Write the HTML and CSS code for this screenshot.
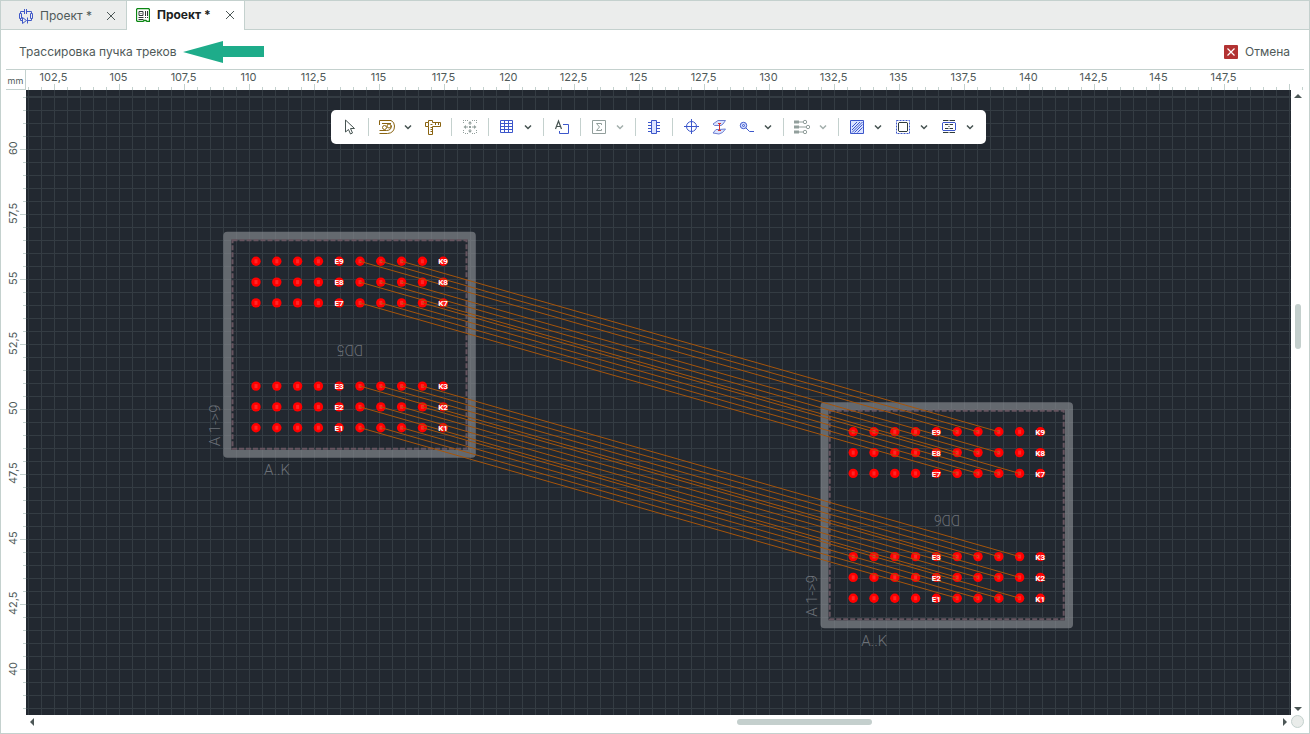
FILE: index.html
```html
<!DOCTYPE html>
<html lang="ru">
<head>
<meta charset="utf-8">
<title>Проект</title>
<link rel="stylesheet" href="styles.css">
</head>
<body>
<nav class="tabs">
  <div class="tab">
    <svg class="tab-icon" width="16" height="16" viewBox="0 0 16 16" fill="none" stroke="#4059c8"><path d="M6 3.500H2.500V6M2.500 10v2.500H5M6.500 1v5M8.500 1v5M8.500 3.500h5V6M13.500 10v2.500H9M1.500 5.500h2v5h-2zM12.500 5.500h2v5h-2zM4.500 9.500v6l4-3zM9.500 9.500v6"/></svg>
    <a class="tab-name" href="#schematic">Проект *</a>
    <button class="close" aria-label="Закрыть"><svg width="10" height="10" viewBox="0 0 10 10"><path d="M1 1l8 8M9 1l-8 8" stroke="#4c5756" fill="none"/></svg></button>
  </div>
  <div class="tab active">
    <svg class="tab-icon" width="14" height="14" viewBox="0 0 14 14" fill="none"><path d="M1.500.5h11l1 1v12h-2.500l-1-1h-2l-1 1h-5.500l-1-1v-11z" stroke="#0b8613" stroke-width="1.300"/><path d="M3 3.500h4v4H3zM4.500 5.500h1M9.500 3v5M11.500 3v5M2.500 9.500h5M2.500 11.500h5M9 9.500h1M11 9.500h1" stroke="#303838"/></svg>
    <a class="tab-name" href="#board">Проект *</a>
    <button class="close" aria-label="Закрыть"><svg width="10" height="10" viewBox="0 0 10 10"><path d="M1 1l8 8M9 1l-8 8" stroke="#4c5756" fill="none"/></svg></button>
  </div>
</nav>

<header class="mode">
  <span class="mode-name">Трассировка пучка треков</span>
  <svg width="81" height="22" viewBox="0 0 81 22"><path d="M0 11L40 0v5h41v11H40v6z" fill="#1eac8a"/></svg>
  <button class="cancel"><svg width="14" height="14" viewBox="0 0 14 14"><rect width="14" height="14" rx="1" fill="#b23232"/><path d="M3.500 3.500l7 7M10.500 3.500l-7 7" stroke="#fff" stroke-width="1.200"/></svg>Отмена</button>
</header>

<main class="workspace">
  <div class="unit">mm</div>
  <div class="ruler-x"><div class="marks-x">
    <span>102,5</span><span>105</span><span>107,5</span><span>110</span><span>112,5</span><span>115</span><span>117,5</span><span>120</span><span>122,5</span><span>125</span><span>127,5</span><span>130</span><span>132,5</span><span>135</span><span>137,5</span><span>140</span><span>142,5</span><span>145</span><span>147,5</span>
  </div></div>
  <div class="ruler-y"><div class="marks-y">
    <span>60</span><span>57,5</span><span>55</span><span>52,5</span><span>50</span><span>47,5</span><span>45</span><span>42,5</span><span>40</span>
  </div></div>

  <section class="canvas">
    <svg class="board" width="100%" height="100%">
      <defs>
        <g id="pad"><circle r="4.700" fill="#f00"/><rect x="-1.500" y="-2" width="3" height="4" fill="#ff2626"/></g>
        <g id="pads">
          <use href="#pad"/><use href="#pad" x="20.800"/><use href="#pad" x="41.600"/><use href="#pad" x="62.400"/><use href="#pad" x="83.200"/><use href="#pad" x="104"/><use href="#pad" x="124.800"/><use href="#pad" x="145.600"/><use href="#pad" x="166.400"/><use href="#pad" x="187.200"/>
        </g>
        <g id="footprint">
          <rect class="courtyard" x="-28.700" y="-25.600" width="244.500" height="218"/>
          <rect class="outline" x="-23.500" y="-21" width="234" height="208.500"/>
          <use href="#pads"/><use href="#pads" y="20.800"/><use href="#pads" y="41.600"/>
          <use href="#pads" y="124.800"/><use href="#pads" y="145.600"/><use href="#pads" y="166.400"/>
          <text class="silk" x="8" y="214">A..K</text>
          <text class="silk" transform="translate(-36 185) rotate(-90)">A 1-&gt;9</text>
        </g>
        <path id="net" d="M104 0l597.200 170.500"/>
        <g id="bundle3"><use href="#net"/><use href="#net" x="20.800"/><use href="#net" x="41.600"/></g>
        <g id="bundle4"><use href="#bundle3"/><use href="#net" x="62.400"/></g>
        <g id="pin-names" class="pin">
          <text x="83" y="3">E9</text><text x="83" y="24">E8</text><text x="83" y="45">E7</text><text x="83" y="128">E3</text><text x="83" y="149">E2</text><text x="83" y="170">E1</text>
          <text x="187" y="3">K9</text><text x="187" y="24">K8</text><text x="187" y="45">K7</text><text x="187" y="128">K3</text><text x="187" y="149">K2</text><text x="187" y="170">K1</text>
        </g>
      </defs>
      <use href="#footprint" x="230" y="171.300"/>
      <use href="#footprint" x="827.200" y="341.800"/>
      <text class="refdes" transform="translate(337 255) rotate(180)">DD5</text>
      <text class="refdes" transform="translate(934 425) rotate(180)">DD6</text>
      <g class="nets" transform="translate(230 171.300)">
        <use href="#bundle3"/><use href="#bundle3" y="20.800"/><use href="#bundle4" y="41.600"/>
        <use href="#bundle4" y="124.800"/><use href="#bundle4" y="145.600"/><use href="#bundle4" y="166.400"/>
      </g>
      <use href="#pin-names" x="230" y="171.300"/>
      <use href="#pin-names" x="827.200" y="341.800"/>
    </svg>

    <svg class="sprite" width="0" height="0"><symbol id="chevron" viewBox="0 0 8 8"><path d="M1 2.500l3 3 3-3" fill="none" stroke="currentColor" stroke-width="1.500"/></symbol></svg>

    <div class="toolbar" role="toolbar">
      <button class="tool" aria-label="Выбор"><svg viewBox="0 0 16 16"><path d="M3.500 1v12l3-2.500 2 4.500 2-1-2-4.500h4z" stroke="#465351"/></svg></button>
      <i class="sep"></i>
      <button class="tool" aria-label="Трассировка"><svg viewBox="0 0 16 16"><path d="M.5 6V1.500h11.500q3.500 1.500 3.500 5.500 0 7-7 7.500H.5M.5 11.500h7q5 0 5-5M3 4.500h9" stroke="#8a6411"/><circle cx="5.500" cy="8.500" r="2" stroke="#8a6411"/><circle cx="10" cy="7" r="2" stroke="#8a6411"/></svg></button>
      <button class="more" aria-label="Ещё"><svg><use href="#chevron"/></svg></button>
      <button class="tool" aria-label="Измерение"><svg viewBox="0 0 16 16"><path d="M3.500 1.500h4v2h8v4h-8v8h-4v-8h-3v-4h3zM3.500 3.500v4M10.500 4v2M13.500 4v2M5.500 5.500h2M5.500 8.500h2M5.500 10.500h2M5.500 12.500h2" stroke="#8a6411"/></svg></button>
      <i class="sep"></i>
      <button class="tool" aria-label="Перемещение" disabled><svg viewBox="0 0 16 16"><path d="M1.500 1v4M3 1.500h3M10 1.500h4M14.500 1v4M1.500 11v4M3 14.500h3M10 14.500h4M14.500 11v4" stroke="#929f9c" stroke-dasharray="1 1"/><path d="M8 2l2 2.500H6zM8 14l2-2.500H6zM1.500 8L4 6v4zM14.500 8L12 6v4zM7 7h2v2H7z" fill="#929f9c"/><path d="M8 4v2M8 10v2M4 8h2M10 8h2" stroke="#929f9c"/></svg></button>
      <i class="sep"></i>
      <button class="tool" aria-label="Сетка"><svg viewBox="0 0 16 16"><path d="M1.500 1.500h12v12h-12zM1.500 4.500h12M1.500 7.500h12M1.500 10.500h12M5.500 1.500v12M9.500 1.500v12" stroke="#3c57cb"/></svg></button>
      <button class="more" aria-label="Ещё"><svg><use href="#chevron"/></svg></button>
      <i class="sep"></i>
      <button class="tool" aria-label="Текст"><svg viewBox="0 0 16 16"><path d="M1.500 10L4.500 2l3 8M2.500 7.500h4" stroke="#465351" stroke-width="1.200"/><path d="M9 5.500h5.500v9h-9V12" stroke="#3c57cb"/></svg></button>
      <i class="sep"></i>
      <button class="tool" aria-label="Сумма" disabled><svg viewBox="0 0 16 16"><path d="M1.500 1.500h13v13h-13zM10.500 6V4.500h-5L8.500 8l-3 3.500h5V10" stroke="#929f9c"/></svg></button>
      <button class="more" aria-label="Ещё" disabled><svg><use href="#chevron"/></svg></button>
      <i class="sep"></i>
      <button class="tool" aria-label="Компонент"><svg viewBox="0 0 16 16"><path d="M5.500 1.500h5v13h-5z" fill="#dbe3ff" stroke="#3c57cb"/><path d="M2 3.500h3M2 6.500h3M2 9.500h3M2 12.500h3M11 3.500h3M11 6.500h3M11 9.500h3M11 12.500h3" stroke="#3c57cb"/></svg></button>
      <i class="sep"></i>
      <button class="tool" aria-label="Площадка"><svg viewBox="0 0 16 16"><circle cx="8.500" cy="7.500" r="5" stroke="#3c57cb"/><path d="M8.500 0v15M1 7.500h15" stroke="#3c57cb"/></svg></button>
      <button class="tool" aria-label="Переходное отверстие"><svg viewBox="0 0 16 16"><path d="M2 5l5-3.500h7.500L12 5l-2 1.500H3.500zM2 14l3-3.500h3l6.500-.5-3 3.500L8 15z" fill="#dbe3ff" stroke="#6d7fd2"/><path d="M8.500 4v8M7 4.500h3M7 11.500h3" stroke="#d43131"/></svg></button>
      <button class="tool" aria-label="Трек"><svg viewBox="0 0 16 16"><circle cx="4.500" cy="6.500" r="3.200" fill="#dbe3ff" stroke="#3c57cb"/><circle cx="4.500" cy="6.500" r="1" stroke="#3c57cb"/><path d="M7 9l3.500 3.500H15" stroke="#3c57cb"/></svg></button>
      <button class="more" aria-label="Ещё"><svg><use href="#chevron"/></svg></button>
      <i class="sep"></i>
      <button class="tool" aria-label="Пучок" disabled><svg viewBox="0 0 16 16"><path d="M0 3h5M0 8h5M0 13h5" stroke="#929f9c" stroke-width="3"/><path d="M5 3h4M5 8h7M5 13h4" stroke="#929f9c"/><circle cx="11" cy="3" r="1.700" stroke="#929f9c"/><circle cx="14" cy="8" r="1.700" stroke="#929f9c"/><circle cx="11" cy="13" r="1.700" stroke="#929f9c"/></svg></button>
      <button class="more" aria-label="Ещё" disabled><svg><use href="#chevron"/></svg></button>
      <i class="sep"></i>
      <button class="tool" aria-label="Заливка"><svg viewBox="0 0 16 16"><path d="M1.500 1.500h13v13h-13z" fill="#dbe3ff" stroke="#3c57cb"/><path d="M3 8l5-5M3 11l8-8M3 13.500L13.500 3M5.500 13.500l8-8M8.500 13.500l5-5" stroke="#3c57cb"/></svg></button>
      <button class="more" aria-label="Ещё"><svg><use href="#chevron"/></svg></button>
      <button class="tool" aria-label="Область"><svg viewBox="0 0 16 16"><path d="M1.500 1.500h13v13h-13z" stroke="#3c57cb" stroke-dasharray="2 1"/><path d="M4 3.500h8l.5.500v8l-.5.500H4l-.5-.5V4z" stroke="#303c3a"/></svg></button>
      <button class="more" aria-label="Ещё"><svg><use href="#chevron"/></svg></button>
      <button class="tool" aria-label="Разрез"><svg viewBox="0 0 16 16"><path d="M2 3.500h12l.5.5v7l-.5.5H2l-.5-.5V4z" stroke="#3c57cb"/><path d="M2 1.500h5M9 1.500h5M4 5.500h3M9 5.500h3M4 9.500h3M9 9.500h3M2 13.500h5M9 13.500h5" stroke="#303c3a"/><path d="M8 1v1M8 5v1M8 7v1M8 9v1M8 13v1" stroke="#303c3a"/></svg></button>
      <button class="more" aria-label="Ещё"><svg><use href="#chevron"/></svg></button>
    </div>
  </section>

  <div class="scroll-y">
    <svg width="8" height="4" viewBox="0 0 8 4"><path d="M0 4l4-4 4 4z"/></svg>
    <div class="track-y"><div class="thumb-y"></div></div>
    <svg width="8" height="4" viewBox="0 0 8 4"><path d="M0 0l4 4 4-4z"/></svg>
  </div>
  <div class="scroll-x">
    <svg width="4" height="8" viewBox="0 0 4 8"><path d="M4 0L0 4l4 4z"/></svg>
    <div class="track-x"><div class="thumb-x"></div></div>
    <svg width="4" height="8" viewBox="0 0 4 8"><path d="M0 0l4 4-4 4z"/></svg>
  </div>
  <button class="overview" aria-label="Обзор"></button>
</main>
</body>
</html>
```
FILE: styles.css
```css
* { box-sizing: border-box; }

body {
  margin: 0;
  height: 100vh;
  display: flex;
  flex-direction: column;
  border: 1px solid #c4d1ce;
  background: #fff;
  color: #4f5a59;
  font: 12px/16px Inter, "Noto Sans", sans-serif;
}

button {
  display: flex;
  align-items: center;
  justify-content: center;
  padding: 0;
  border: 0;
  background: none;
  color: inherit;
  font: inherit;
}

.tabs {
  display: flex;
  height: 29px;
  background: linear-gradient(#c4d1ce, #c4d1ce) bottom / 100% 1px no-repeat #ebedec;
}

.tab {
  display: flex;
  align-items: center;
  padding: 0 9px 0 17px;
  border-right: 1px solid #c4d1ce;
}

.tab.active {
  padding: 0 8px 2px 9px;
  background: #fff;
  color: #1b2221;
  font-weight: 700;
}

.tab-icon { margin-right: 6px; }
.active .tab-icon { margin-right: 7px; }
.tab-name { color: inherit; text-decoration: none; }
.close { width: 12px; height: 16px; margin-left: 13px; }

.mode {
  display: flex;
  align-items: center;
  height: 39px;
  padding: 5px 19px 0 18px;
}

.mode-name { margin-right: 7px; }
.cancel { gap: 7px; margin-left: auto; }

.workspace {
  flex: 1;
  min-height: 0;
  display: grid;
  grid-template-columns: 25px 1fr 18px;
  grid-template-rows: 21px 1fr 18px;
}

.unit {
  grid-area: 1 / 1;
  margin-left: 5px;
  padding-top: 3px;
  border: 1px solid #c4d1ce;
  border-left: 0;
  font-size: 9px;
  line-height: 16px;
  text-align: center;
}

.ruler-x {
  grid-area: 1 / 2 / 2 / 4;
  margin-right: 5px;
  overflow: hidden;
  border-top: 1px solid #c4d1ce;
  background:
    repeating-linear-gradient(90deg, #c4d1ce 0 1px, transparent 1px 13px) 2px 100% / 100% 3px no-repeat,
    repeating-linear-gradient(90deg, #c4d1ce 0 1px, transparent 1px 65px) 28px 100% / 100% 6px no-repeat;
}

.marks-x {
  display: flex;
  margin-left: -5px;
  font-size: 11px;
  line-height: 14px;
}

.marks-x span { flex: 0 0 65px; text-align: center; }

.ruler-y {
  grid-area: 2 / 1;
  overflow: hidden;
  background:
    repeating-linear-gradient(#c4d1ce 0 1px, transparent 1px 13px) 100% 7px / 3px 100% no-repeat,
    repeating-linear-gradient(#c4d1ce 0 1px, transparent 1px 65px) 100% 59px / 6px 100% no-repeat;
}

.marks-y {
  display: flex;
  flex-direction: column;
  margin: 26px 0 0 5px;
  font-size: 11px;
  line-height: 14px;
}

.marks-y span {
  flex: 0 0 65px;
  width: 14px;
  writing-mode: vertical-rl;
  transform: rotate(180deg);
  text-align: center;
}

.canvas {
  grid-area: 2 / 2;
  position: relative;
  overflow: hidden;
  background:
    repeating-linear-gradient(90deg, #343c43 0 1px, transparent 1px 13px) 2px 0,
    repeating-linear-gradient(#343c43 0 1px, transparent 1px 13px) 0 7px,
    #222830;
}

.board { position: absolute; inset: 0; }
.sprite { position: absolute; }
.courtyard { fill: none; stroke: #888c92; stroke-opacity: .65; stroke-width: 8; stroke-linejoin: round; }
.outline { fill: none; stroke: #65545f; stroke-width: 2; stroke-dasharray: 5 2; }
.nets { fill: none; stroke: #a6550b; stroke-width: 1; }
.silk { fill: #6c7178; font: 300 15px Roboto, sans-serif; }
.refdes { fill: #6c7178; font: 300 14px Roboto, sans-serif; }
.pin { fill: #fff; font: 700 8px Roboto, sans-serif; text-anchor: middle; }

.toolbar {
  position: relative;
  display: flex;
  align-items: center;
  width: max-content;
  height: 34px;
  margin: 20px auto 0;
  padding: 0 5px;
  border-radius: 5px;
  background: #fff;
}

.tool { width: 28px; height: 28px; }
.tool svg { width: 16px; height: 16px; fill: none; }
.more { width: 14px; height: 28px; margin-right: 4px; color: #465351; }
.more:disabled { color: #a3afac; }
.more svg { width: 8px; height: 8px; }
.sep { width: 1px; height: 18px; margin: 0 4px; background: #c4d1ce; }

.scroll-y,
.scroll-x { display: flex; align-items: center; fill: #4c5756; }

.scroll-y { grid-area: 2 / 3; flex-direction: column; padding: 4px 6px 4px 2px; }
.scroll-x { grid-area: 3 / 2; padding: 0 4px 4px 4px; }
.track-y { flex: 1; display: flex; flex-direction: column; padding-top: 28vh; }
.track-x { flex: 1; display: flex; }

.thumb-y {
  width: 6px;
  height: 45px;
  border-radius: 3px;
  background: #c4cfcd;
}

.thumb-x {
  width: 135px;
  height: 6px;
  margin-left: 56.3%;
  border-radius: 3px;
  background: #c4cfcd;
}

.overview {
  grid-area: 3 / 3;
  width: 13px;
  height: 13px;
  border: 1px solid #c4d1ce;
  border-radius: 50%;
  background: #e9ecea;
}
```
